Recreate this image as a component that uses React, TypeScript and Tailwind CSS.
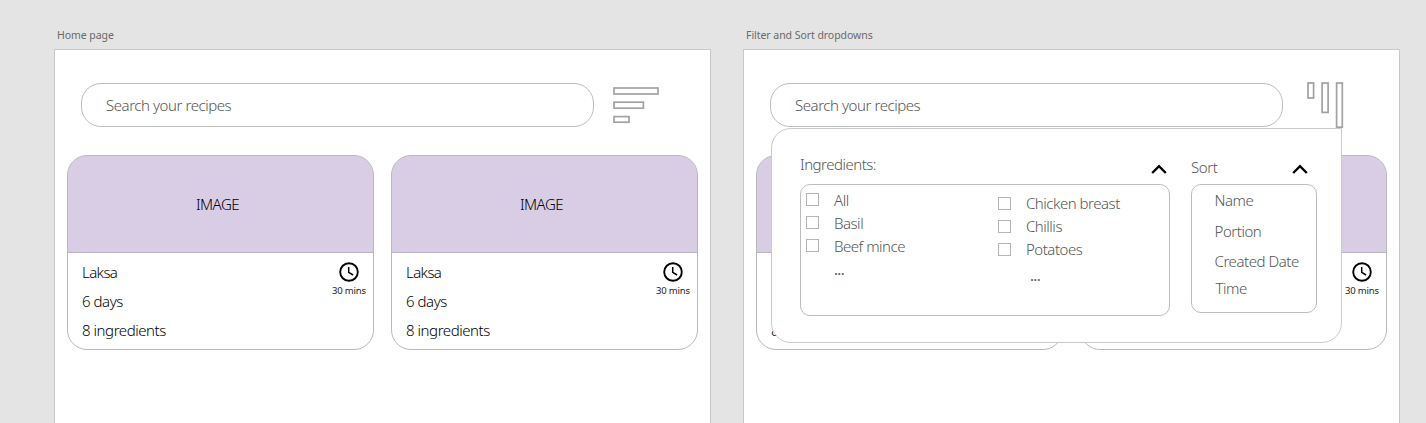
import type { ReactNode } from "react";
import clsx from "clsx";

function Artboard({ title, children }: { title: string; children: ReactNode }) {
  return (
    <section className="w-[657px] shrink-0">
      <h2 className="h-[21px] pl-[3px] text-[10.5px] font-normal leading-[14px] tracking-[-0.05px] text-[#6a6a6a]">{title}</h2>
      <div className="relative h-[374px] border border-b-0 border-[#c8c8c8] bg-white">{children}</div>
    </section>
  );
}

function SortBars() {
  return (
    <svg className="ml-[18px] mt-[2px] h-[40px] w-[50px]" viewBox="0 0 50 40" fill="none" stroke="#a0a2a4" strokeWidth="1.7">
      <rect x="2" y="3" width="44" height="6" />
      <rect x="2" y="17.2" width="29.4" height="6" />
      <rect x="2" y="31.6" width="15" height="5.6" />
    </svg>
  );
}

function SortColumns() {
  return (
    <svg className="ml-[18px] mt-[-2px] h-[50px] w-[50px]" viewBox="0 0 50 50" fill="none" stroke="#a0a2a4" strokeWidth="1.7">
      <rect x="7" y="2" width="5.6" height="15" />
      <rect x="21.1" y="2" width="6" height="29.4" />
      <rect x="35.6" y="2" width="5.7" height="44.2" />
    </svg>
  );
}

function SearchRow({ children }: { children: ReactNode }) {
  return (
    <div className="flex h-[44px] items-start pl-[26px]">
      <div className="flex h-[44px] w-[513px] shrink-0 items-center rounded-[20px] border border-[#bcbcbc] pl-[24px] text-[#555]">
        <span className="tracking-[-0.44px]">Search your recipes</span>
      </div>
      {children}
    </div>
  );
}

function RecipeCard() {
  return (
    <article className="h-[195px] w-[307px] shrink-0 overflow-hidden rounded-[20px] border border-[#b9b9b9]">
      <div className="-mx-px -mt-px flex h-[98px] items-center justify-center rounded-t-[20px] border border-[#a9a5af] border-b-[#b9b3c1] bg-[#d9cce5] pr-[6px] text-black">
        <span className="tracking-[-0.5px]">IMAGE</span>
      </div>
      <div className="flex justify-between pl-[14px] pr-[7px] text-black">
        <div className="flex flex-col pt-[5px] leading-[29px]">
          <span className="tracking-[-0.6px]">Laksa</span>
          <span className="tracking-[-0.45px]">6 days</span>
          <span className="tracking-[-0.45px]">8 ingredients</span>
        </div>
        <div className="flex flex-col items-center pt-[8px]">
          <svg className="h-[22px] w-[22px]" viewBox="0 0 22 22" fill="none" stroke="black">
            <circle cx="11" cy="11" r="8.8" strokeWidth="1.9" />
            <path d="M10.7 6V11.4L15.1 14" strokeWidth="1.5" />
          </svg>
          <span className="text-[9.5px] font-normal leading-[16px] tracking-[-0.15px] text-[#222]">30 mins</span>
        </div>
      </div>
    </article>
  );
}

function Screen({ icon }: { icon: ReactNode }) {
  return (
    <div className="pt-[33px]">
      <SearchRow>{icon}</SearchRow>
      <div className="mt-[28px] flex gap-[17px] pl-[12px]">
        <RecipeCard />
        <RecipeCard />
      </div>
    </div>
  );
}

function ChevronUp() {
  return (
    <svg className="h-[12px] w-[16px]" viewBox="0 0 16 12" fill="none" stroke="black" strokeWidth="2.4">
      <path d="M1.2 10L8 3.2L14.8 10" />
    </svg>
  );
}

function CheckList({ items, className, boxClassName }: { items: string[]; className: string; boxClassName: string }) {
  return (
    <ul className={clsx("flex w-[192px] flex-col", className)}>
      {items.map((item) => (
        <li key={item} className="flex h-[23px] items-start">
          <span className={clsx("h-[13px] w-[13px] border border-[#b4b4b4]", boxClassName)} />
          <span className="ml-[15px] whitespace-nowrap tracking-[-0.48px]">{item}</span>
        </li>
      ))}
    </ul>
  );
}

function FilterPanel() {
  return (
    <div className="absolute left-[27px] top-[78px] flex h-[215px] w-[571px] rounded-[20px] rounded-tr-none border border-[#cacaca] bg-white pl-[28px] text-[#555]">
      <div className="w-[370px]">
        <div className="flex h-[55px] items-end justify-between pr-[3px]">
          <span className="mb-[10px] tracking-[-0.5px]">Ingredients:</span>
          <span className="mb-[9px]"><ChevronUp /></span>
        </div>
        <div className="flex h-[132px] rounded-[10px] border border-[#bcbcbc] pl-[5px]">
          <div>
            <CheckList items={["All", "Basil", "Beef mince"]} className="pt-[5px]" boxClassName="mt-[3px]" />
            <div className="h-[16px] pl-[28px] font-normal leading-[20px] tracking-[-0.7px]">...</div>
          </div>
          <div>
            <CheckList items={["Chicken breast", "Chillis", "Potatoes"]} className="pt-[8px]" boxClassName="mt-[4px]" />
            <div className="mt-[3px] h-[16px] pl-[32px] font-normal leading-[20px] tracking-[-0.7px]">...</div>
          </div>
        </div>
      </div>
      <div className="ml-[21px] w-[126px]">
        <div className="flex h-[55px] items-end justify-between pr-[9px]">
          <span className="mb-[7px] tracking-[-0.4px]">Sort</span>
          <span className="mb-[9px]"><ChevronUp /></span>
        </div>
        <div className="flex h-[129px] flex-col rounded-[10px] border border-[#bcbcbc] pl-[22.5px] pt-[5px] leading-[20px] tracking-[-0.45px]">
          <span>Name</span>
          <span className="mt-[11px]">Portion</span>
          <span className="mt-[10px] whitespace-nowrap">Created Date</span>
          <span className="mt-[7px] pl-px">Time</span>
        </div>
      </div>
    </div>
  );
}

export default function App() {
  return (
    <main className="flex h-[423px] w-[1426px] gap-[32px] overflow-hidden bg-[#e4e4e4] pl-[54px] pt-[28px] font-['Noto_Sans',sans-serif] text-[15px] leading-[20px] font-light">
      <Artboard title="Home page">
        <Screen icon={<SortBars />} />
      </Artboard>
      <Artboard title="Filter and Sort dropdowns">
        <Screen icon={<SortColumns />} />
        <FilterPanel />
      </Artboard>
    </main>
  );
}
